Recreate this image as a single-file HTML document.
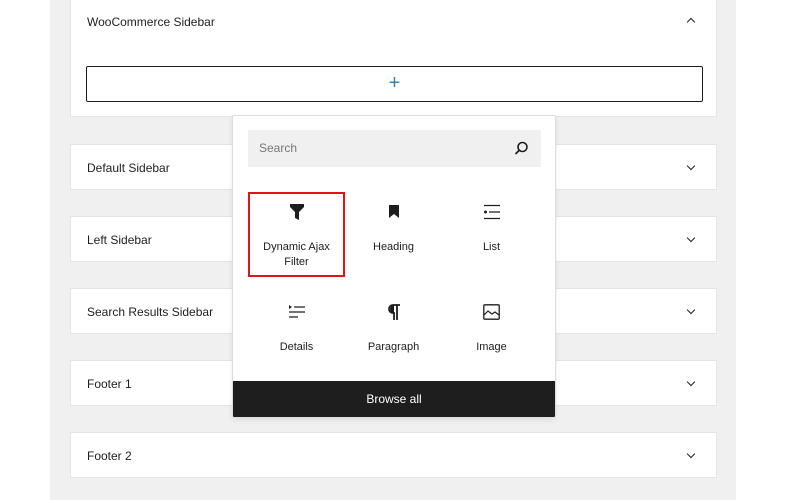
<!DOCTYPE html>
<html><head><style>
body{margin:0;width:800px;height:500px;background:#fff;position:relative;overflow:hidden;font-family:"Liberation Sans",sans-serif;color:#1e1e1e}
.bg{position:absolute;left:50px;top:0;width:686px;height:500px;background:#f0f0f0}
.panel{position:absolute;left:70px;width:647px;background:#fff;border:1px solid #e4e4e4;box-sizing:border-box}
.t{position:absolute;left:16px;font-size:12px}
.chev{position:absolute;right:22px;width:5px;height:5px;border-right:1.6px solid #1e1e1e;border-bottom:1.6px solid #1e1e1e}
.pop{position:absolute;left:232px;top:115px;width:324px;height:303px;background:#fff;border:1px solid #ddd;box-sizing:border-box;border-radius:2px;box-shadow:0 2px 6px rgba(0,0,0,.08);overflow:hidden}
.item{position:absolute;width:97px;text-align:center;font-size:11px;line-height:15px;color:#1e1e1e}
.item svg{display:block;margin:0 auto 20px}
</style></head><body>
<div class="bg"></div>
<div class="panel" style="top:-2px;height:119px">
 <div class="t" style="top:16px">WooCommerce Sidebar</div>
 <div class="chev" style="top:20px;transform:rotate(-135deg)"></div>
 <div style="position:absolute;left:15px;top:67px;width:617px;height:36px;border:1px solid #1e1e1e;box-sizing:border-box;border-radius:2px;text-align:center;color:#3582c4;font-size:20px;line-height:32px">+</div>
</div>
<div class="panel" style="top:144px;height:46px"><div class="t" style="top:16px">Default Sidebar</div><div class="chev" style="top:18px;transform:rotate(45deg)"></div></div>
<div class="panel" style="top:216px;height:46px"><div class="t" style="top:16px">Left Sidebar</div><div class="chev" style="top:18px;transform:rotate(45deg)"></div></div>
<div class="panel" style="top:288px;height:46px"><div class="t" style="top:16px">Search Results Sidebar</div><div class="chev" style="top:18px;transform:rotate(45deg)"></div></div>
<div class="panel" style="top:360px;height:46px"><div class="t" style="top:16px">Footer 1</div><div class="chev" style="top:18px;transform:rotate(45deg)"></div></div>
<div class="panel" style="top:432px;height:46px"><div class="t" style="top:16px">Footer 2</div><div class="chev" style="top:18px;transform:rotate(45deg)"></div></div>

<div class="pop">
 <div style="position:absolute;left:15px;top:14px;width:293px;height:37px;background:#f0f0f0;font-size:12px;color:#777;line-height:37px;padding-left:11px;box-sizing:border-box">Search
  <svg style="position:absolute;right:12px;top:11px" width="15" height="15" viewBox="0 0 15 15"><circle cx="8.5" cy="6" r="4.5" fill="none" stroke="#1e1e1e" stroke-width="1.6"/><path d="M5.5 9L1.5 13" stroke="#1e1e1e" stroke-width="1.7"/></svg></div>
 <div style="position:absolute;left:15px;top:76px;width:97px;height:85px;border:2px solid #e0141a;box-sizing:border-box"></div>
 <div class="item" style="left:15px;top:88px"><svg width="14" height="16" viewBox="0 0 14 16"><path d="M0 0H14V3L9 8V16L5 14V8L0 3Z" fill="#1e1e1e"/></svg>Dynamic Ajax<br>Filter</div>
 <div class="item" style="left:112px;top:88px"><svg width="14" height="16" viewBox="0 0 14 16"><path d="M2 1H12V14L7 10L2 14Z" fill="#1e1e1e"/></svg>Heading</div>
 <div class="item" style="left:210px;top:88px"><svg width="16" height="16" viewBox="0 0 16 16"><path d="M0 1.5H16M5 8H16M0 14.5H16" stroke="#1e1e1e" stroke-width="1.3"/><circle cx="1.5" cy="8" r="1.5" fill="#1e1e1e"/></svg>List</div>
 <div class="item" style="left:15px;top:188px"><svg width="16" height="16" viewBox="0 0 16 16"><path d="M0 1L3 3L0 5Z" fill="#1e1e1e"/><path d="M5 3H16M0 8H16M0 13H9" stroke="#1e1e1e" stroke-width="1.3"/></svg>Details</div>
 <div class="item" style="left:112px;top:188px"><svg width="14" height="16" viewBox="0 0 14 16"><path d="M13 1H6A4 4 0 0 0 6 9H7V16M10 1V16" fill="none" stroke="#1e1e1e" stroke-width="1.8"/><path d="M7 1A4 4 0 0 0 7 9Z" fill="#1e1e1e"/></svg>Paragraph</div>
 <div class="item" style="left:210px;top:188px"><svg width="17" height="16" viewBox="0 0 17 16"><rect x=".8" y=".8" width="15.4" height="14.4" rx="1" fill="none" stroke="#1e1e1e" stroke-width="1.3"/><path d="M1 11L5 7L9 10L12 8L16 11" fill="none" stroke="#1e1e1e" stroke-width="1.2"/></svg>Image</div>
 <div style="position:absolute;left:0;bottom:0;width:100%;height:36px;background:#1e1e1e;color:#fff;text-align:center;line-height:36px;font-size:12px">Browse all</div>
</div>
</body></html>
